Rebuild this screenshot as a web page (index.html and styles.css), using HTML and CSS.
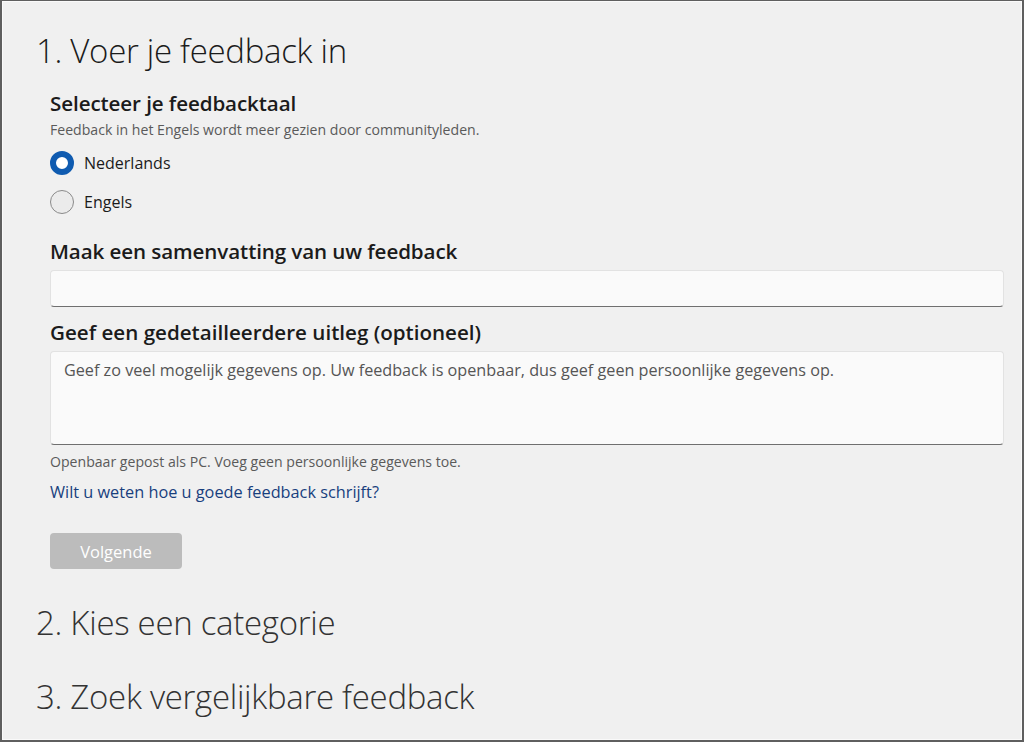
FILE: index.html
```html
<!DOCTYPE html>
<html lang="nl">
<head>
<meta charset="utf-8">
<title>Feedback</title>
<link rel="stylesheet" href="styles.css">
</head>
<body>
<div class="frame">
  <section class="step">
    <h1 class="step-title">1. Voer je feedback in</h1>
    <div class="step-body">
      <h2 class="label label-first">Selecteer je feedbacktaal</h2>
      <p class="hint">Feedback in het Engels wordt meer gezien door communityleden.</p>
      <div class="radios">
        <label class="radio"><span class="dot dot-on"></span><span>Nederlands</span></label>
        <label class="radio"><span class="dot"></span><span>Engels</span></label>
      </div>
      <h2 class="label label-summary">Maak een samenvatting van uw feedback</h2>
      <div class="field field-line"></div>
      <h2 class="label label-detail">Geef een gedetailleerdere uitleg (optioneel)</h2>
      <div class="field field-area"><span class="placeholder">Geef zo veel mogelijk gegevens op. Uw feedback is openbaar, dus geef geen persoonlijke gegevens op.</span></div>
      <p class="hint hint-public">Openbaar gepost als PC. Voeg geen persoonlijke gegevens toe.</p>
      <a class="link" href="#">Wilt u weten hoe u goede feedback schrijft?</a>
      <div class="actions"><button class="btn" disabled>Volgende</button></div>
    </div>
  </section>
  <h1 class="step-title step-next">2. Kies een categorie</h1>
  <h1 class="step-title step-last">3. Zoek vergelijkbare feedback</h1>
</div>
</body>
</html>
```
FILE: styles.css
```css
* { box-sizing: border-box; }
html, body { margin: 0; padding: 0; }
body {
  width: 1024px;
  height: 742px;
  overflow: hidden;
  font-family: "Open Sans", "Noto Sans", sans-serif;
  color: #1b1b1b;
  background: #f0f0f0;
}
.frame {
  width: 1024px;
  height: 742px;
  border: 2px solid #5f5f5f;
  border-top-width: 1px;
  box-shadow: inset 0 0 0 1px #fafafa;
  background: #f0f0f0;
  padding: 0 18px 0 34px;
  display: flex;
  flex-direction: column;
}
.step-title {
  margin: 0;
  font-weight: 300;
  font-size: 33px;
  line-height: 40px;
  color: #1b1b1b;
  letter-spacing: -0.3px;
}
.step > .step-title { margin-top: 30px; }
.step-body {
  padding-left: 14px;
  display: flex;
  flex-direction: column;
  align-items: flex-start;
}
.label {
  margin: 0;
  font-size: 20.6px;
  font-weight: 600;
  line-height: 26px;
  color: #1b1b1b;
  letter-spacing: -0.1px;
}
.label-first { margin-top: 19px; }
.label-summary { margin-top: 24px; }
.label-detail { margin-top: 12px; }
.label-detail { letter-spacing: 0; }
.hint {
  margin: 5px 0 0;
  font-size: 14.1px;
  line-height: 18px;
  color: #5a5a5a;
}
.radios {
  display: flex;
  flex-direction: column;
  gap: 15px;
  margin-top: 12px;
}
.radio {
  display: flex;
  align-items: center;
  gap: 10px;
  font-size: 16px;
  line-height: 24px;
  color: #1b1b1b;
}
.dot {
  width: 24px;
  height: 24px;
  border-radius: 50%;
  border: 1px solid #8a8a8a;
  background: #ebebeb;
}
.dot-on {
  border: 6.5px solid #0f5bb0;
  background: #ffffff;
}
.field {
  align-self: stretch;
  background: #fafafa;
  border: 1px solid #e2e2e2;
  border-bottom: 1.5px solid #6f6f6f;
  border-radius: 4px;
}
.field-line { height: 37px; margin-top: 6px; }
.field-area {
  height: 94px;
  margin-top: 6px;
  padding: 7px 13px;
}
.placeholder {
  font-size: 16.2px;
  line-height: 22px;
  color: #555555;
}
.hint-public { margin-top: 8px; }
.link {
  margin-top: 11px;
  font-size: 16.3px;
  line-height: 20px;
  color: #183f7e;
  text-decoration: none;
}
.actions { margin-top: 31px; }
.btn {
  display: block;
  width: 132px;
  height: 36px;
  border: none;
  border-radius: 4px;
  background: #bcbcbc;
  color: #ffffff;
  font-family: inherit;
  font-size: 16.5px;
}
.step-next { margin-top: 34px; color: #333; }
.step-last { margin-top: 34px; color: #333; }
```
